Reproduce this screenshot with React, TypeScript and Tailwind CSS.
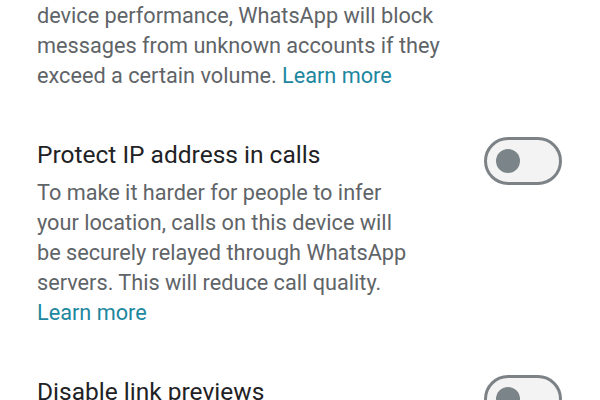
export default function App() {
  const font = { fontFamily: "Roboto, 'Noto Sans', sans-serif" };

  const Toggle = ({ className = "" }: { className?: string }) => (
    <div
      className={`flex h-[48px] w-[78px] shrink-0 items-center rounded-full border-[3px] border-[#7d8286] bg-[#f4f3f3] pl-[9px] ${className}`}
    >
      <div className="h-[24px] w-[24px] rounded-full bg-[#7b8489]" />
    </div>
  );

  return (
    <div className="h-[400px] w-[600px] overflow-hidden bg-white" style={font}>
      <div className="flex flex-col gap-[49px] pl-[37px] pr-[38px] pt-px">
        <p className="whitespace-nowrap text-[21.7px] leading-[30px] text-[#5f6468]">
          device performance, WhatsApp will block
          <br />
          messages from unknown accounts if they
          <br />
          exceed a certain volume.{" "}
          <span className="text-[#1d87a0]">Learn more</span>
        </p>

        <div className="flex items-start justify-between">
          <div className="flex flex-col gap-[8px]">
            <h3 className="whitespace-nowrap text-[24.5px] leading-[30px] text-[#1f2225]">
              Protect IP address in calls
            </h3>
            <p className="whitespace-nowrap text-[21.7px] leading-[30px] text-[#5f6468]">
              To make it harder for people to infer
              <br />
              your location, calls on this device will
              <br />
              be securely relayed through WhatsApp
              <br />
              servers. This will reduce call quality.
              <br />
              <span className="text-[#1d87a0]">Learn more</span>
            </p>
          </div>
          <Toggle className="-mt-[3px]" />
        </div>

        <div className="flex items-start justify-between">
          <h3 className="whitespace-nowrap text-[24.5px] leading-[30px] text-[#1f2225]">
            Disable link previews
          </h3>
          <Toggle className="-mt-[2px]" />
        </div>
      </div>
    </div>
  );
}
